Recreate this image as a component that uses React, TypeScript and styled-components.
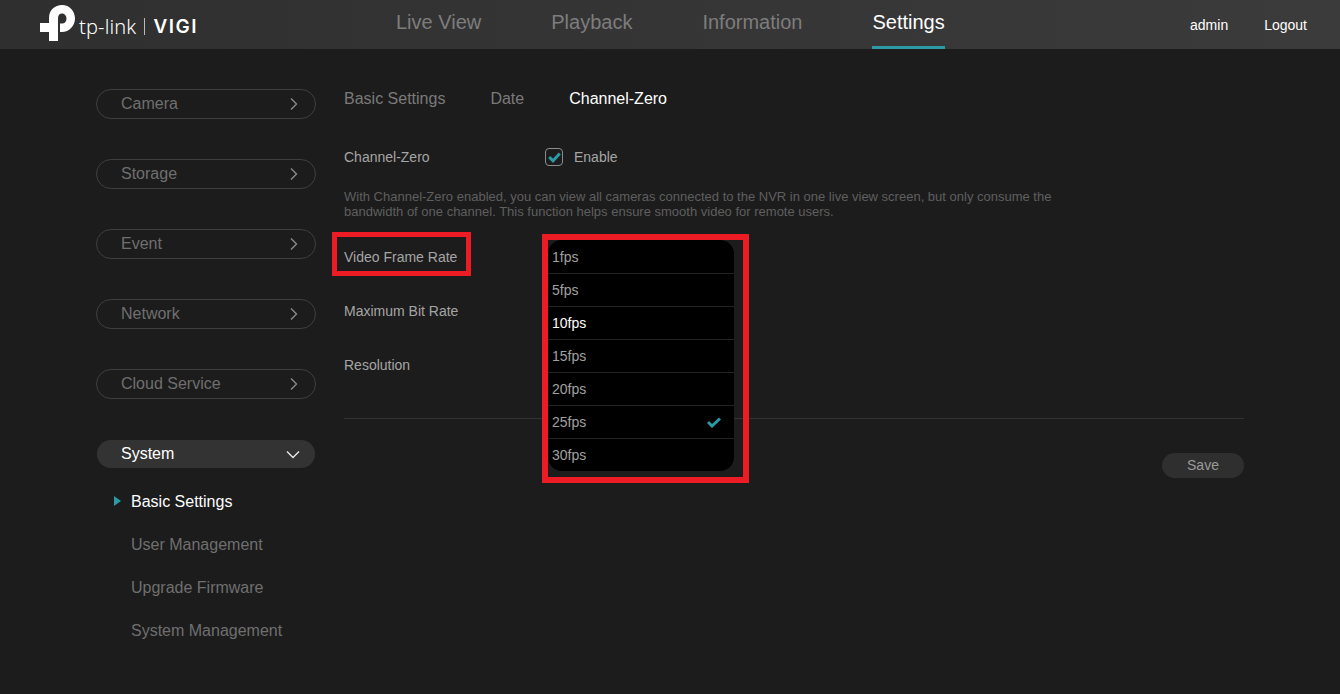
import styled, { createGlobalStyle } from "styled-components";

const sideItems = ["Camera", "Storage", "Event", "Network", "Cloud Service"];
const subItems = ["Basic Settings", "User Management", "Upgrade Firmware", "System Management"];
const navItems = ["Live View", "Playback", "Information", "Settings"];
const tabs = ["Basic Settings", "Date", "Channel-Zero"];
const rates = ["1fps", "5fps", "10fps", "15fps", "20fps", "25fps", "30fps"];

function Chevron({ down }: { down?: boolean }) {
  return (
    <svg width="14" height="14" viewBox="0 0 14 14" fill="none">
      <path
        d={down ? "M1 4.500 L7 10.500 L13 4.500" : "M4 1.500 L9.500 7 L4 12.500"}
        stroke={down ? "#e8e8e8" : "#8a8a8a"}
        strokeWidth="1.400"
      />
    </svg>
  );
}

export default function App() {
  return (
    <>
      <GlobalStyle />
      <Header>
        <Logo>
          <svg width="35" height="36" viewBox="0 0 35 36">
            <path
              fill="#fff"
              d="M9 18 L9 13 C9 5 15 0 22 0 C29.500 0 35 6 35 13.500 C35 21 29 27 22 27 L20 27 L20 18.500 L22 18.500 C24.800 18.500 26.500 16.500 26.500 13.500 C26.500 10.500 24.500 8.500 22 8.500 C19.500 8.500 18 10.500 18 13 L18 36 L9 36 L9 27 L0 27 L0 18 Z"
            />
          </svg>
          <LogoWord>tp-link</LogoWord>
          <LogoBar />
          <LogoBrand>VIGI</LogoBrand>
        </Logo>
        <Nav>
          {navItems.map((item) => (
            <NavItem key={item} $active={item === "Settings"}>
              {item}
            </NavItem>
          ))}
        </Nav>
        <UserArea>
          <span>admin</span>
          <span>Logout</span>
        </UserArea>
      </Header>
      <Body>
        <Sidebar>
          {sideItems.map((item) => (
            <SideButton key={item}>
              {item}
              <Chevron />
            </SideButton>
          ))}
          <SystemButton>
            System
            <Chevron down />
          </SystemButton>
          <SubList>
            {subItems.map((item, i) => (
              <SubItem key={item} $active={i === 0}>
                {item}
              </SubItem>
            ))}
          </SubList>
        </Sidebar>
        <Main>
          <Tabs>
            {tabs.map((tab) => (
              <Tab key={tab} $active={tab === "Channel-Zero"}>
                {tab}
              </Tab>
            ))}
          </Tabs>
          <EnableRow>
            <EnableLabel>Channel-Zero</EnableLabel>
            <CheckBox>
              <svg width="13" height="11" viewBox="0 0 13 11" fill="none">
                <path d="M1.200 5 L5 8.800 L11.800 1.500" stroke="#2b9aa5" strokeWidth="3" />
              </svg>
            </CheckBox>
            <EnableText>Enable</EnableText>
          </EnableRow>
          <Description>
            With Channel-Zero enabled, you can view all cameras connected to the NVR in one live view screen, but only consume the
            <br />
            bandwidth of one channel. This function helps ensure smooth video for remote users.
          </Description>
          <Fields>
            <FieldRow>
              <Label>Video Frame Rate</Label>
              <LabelMark />
              <Dropdown>
                {rates.map((rate) => (
                  <Option key={rate} $current={rate === "10fps"}>
                    {rate}
                    {rate === "25fps" && (
                      <svg width="14" height="11" viewBox="0 0 14 11" fill="none">
                        <path d="M1 5 L5 9 L13 1.500" stroke="#2b9aa5" strokeWidth="3" />
                      </svg>
                    )}
                  </Option>
                ))}
              </Dropdown>
              <DropdownMark />
            </FieldRow>
            <FieldRow>
              <Label>Maximum Bit Rate</Label>
            </FieldRow>
            <FieldRow>
              <Label>Resolution</Label>
            </FieldRow>
          </Fields>
          <Divider />
          <Actions>
            <SaveButton>Save</SaveButton>
          </Actions>
        </Main>
      </Body>
    </>
  );
}

const GlobalStyle = createGlobalStyle`
  html, body {
    margin: 0;
    height: 100%;
    background: #1c1c1c;
    font-family: "Liberation Sans", Arial, sans-serif;
    overflow: hidden;
  }
  * {
    box-sizing: border-box;
  }
`;

const Header = styled.header`
  height: 49px;
  background: linear-gradient(90deg, #2f2f2f 0%, #3b3b3b 100%);
  display: flex;
`;

const Logo = styled.div`
  display: flex;
  align-items: center;
  margin-left: 40px;
  width: 356px;
  height: 46px;
  color: #fff;
  svg {
    flex: none;
  }
`;

const LogoWord = styled.span`
  font-family: "Noto Sans", sans-serif;
  font-size: 20px;
  font-weight: 300;
  letter-spacing: 0.15px;
  margin-left: 4px;
  line-height: 1;
  padding-top: 7px;
`;

const LogoBar = styled.span`
  width: 1px;
  height: 17px;
  background: #bbb;
  margin: 6px 8px 0 8px;
`;

const LogoBrand = styled.span`
  font-family: Inter, sans-serif;
  font-size: 19px;
  font-weight: 600;
  letter-spacing: 1.5px;
  line-height: 1;
  padding-top: 7px;
`;

const Nav = styled.nav`
  display: flex;
  gap: 70px;
`;

const NavItem = styled.div<{ $active?: boolean }>`
  font-size: 20px;
  line-height: 45px;
  height: 49px;
  color: ${(p) => (p.$active ? "#fff" : "#7d7d7d")};
  border-bottom: 3px solid ${(p) => (p.$active ? "#2b9aa5" : "transparent")};
`;

const UserArea = styled.div`
  margin-left: auto;
  margin-right: 33px;
  display: flex;
  gap: 36px;
  font-size: 14px;
  line-height: 50px;
  color: #fff;
`;

const Body = styled.div`
  display: flex;
  padding: 40px 0 0 96px;
`;

const Sidebar = styled.aside`
  width: 220px;
  display: flex;
  flex-direction: column;
`;

const SideButton = styled.div`
  height: 30px;
  margin-bottom: 40px;
  border: 1px solid #3f3f3f;
  border-radius: 15px;
  padding: 0 14px 0 24px;
  display: flex;
  align-items: center;
  justify-content: space-between;
  font-size: 16px;
  color: #6f6f6f;
`;

const SystemButton = styled.div`
  height: 28px;
  margin: 1px 1px 0 1px;
  background: #333;
  border-radius: 14px;
  padding: 0 15px 0 24px;
  display: flex;
  align-items: center;
  justify-content: space-between;
  font-size: 16px;
  color: #fff;
`;

const SubList = styled.ul`
  list-style: none;
  margin: 12px 0 0;
  padding: 0 0 0 35px;
`;

const SubItem = styled.li<{ $active?: boolean }>`
  height: 43px;
  line-height: 43px;
  font-size: 16px;
  color: ${(p) => (p.$active ? "#fff" : "#6f6f6f")};
  position: relative;
  &::before {
    content: "";
    display: ${(p) => (p.$active ? "block" : "none")};
    position: absolute;
    left: -17px;
    top: 16px;
    border-left: 7px solid #2b9aa5;
    border-top: 5px solid transparent;
    border-bottom: 5px solid transparent;
  }
`;

const Main = styled.main`
  width: 900px;
  margin-left: 28px;
  position: relative;
`;

const Tabs = styled.div`
  display: flex;
  gap: 45px;
  height: 18px;
  line-height: 20px;
`;

const Tab = styled.div<{ $active?: boolean }>`
  font-size: 16px;
  color: ${(p) => (p.$active ? "#fff" : "#7a7a7a")};
`;

const EnableRow = styled.div`
  display: flex;
  align-items: center;
  height: 20px;
  margin-top: 40px;
`;

const Label = styled.div`
  width: 200px;
  font-size: 14px;
  color: #a5a5a5;
`;

const EnableLabel = styled(Label)`
  width: 201px;
`;

const CheckBox = styled.div`
  width: 18px;
  height: 18px;
  border: 1px solid #8c8c8c;
  border-radius: 4px;
  display: flex;
  align-items: center;
  justify-content: center;
`;

const EnableText = styled.span`
  margin-left: 11px;
  font-size: 14px;
  color: #a5a5a5;
`;

const Description = styled.p`
  margin: 22px 0 0;
  font-size: 13px;
  line-height: 15px;
  color: #5f5f5f;
  white-space: nowrap;
`;

const Fields = styled.div`
  margin-top: 11px;
  display: flex;
  flex-direction: column;
`;

const FieldRow = styled.div`
  height: 54px;
  display: flex;
  align-items: center;
  position: relative;
`;

const LabelMark = styled.div`
  position: absolute;
  left: -12px;
  top: 2px;
  width: 139px;
  height: 44px;
  border: 5px solid #ed1c24;
`;

const Dropdown = styled.div`
  position: absolute;
  left: 204px;
  top: 10px;
  width: 186px;
  background: #000;
  border-radius: 14px;
  overflow: hidden;
`;

const Option = styled.div<{ $current?: boolean }>`
  height: 33px;
  padding: 0 13px 0 4px;
  display: flex;
  align-items: center;
  justify-content: space-between;
  font-size: 14px;
  color: ${(p) => (p.$current ? "#fff" : "#a0a0a0")};
  border-top: 1px solid #222;
  &:first-child {
    border-top: none;
  }
`;

const DropdownMark = styled.div`
  position: absolute;
  left: 198px;
  top: 4px;
  width: 207px;
  height: 249px;
  border: 6px solid #ed1c24;
`;

const Divider = styled.hr`
  margin: 26px 0 0;
  border: none;
  border-top: 1px solid #333;
`;

const Actions = styled.div`
  display: flex;
  justify-content: flex-end;
  margin-top: 34px;
`;

const SaveButton = styled.button`
  width: 82px;
  height: 25px;
  border: none;
  border-radius: 13px;
  background: #2f2f2f;
  color: #9a9a9a;
  font-family: inherit;
  font-size: 14px;
  padding: 0 0 2px;
`;
